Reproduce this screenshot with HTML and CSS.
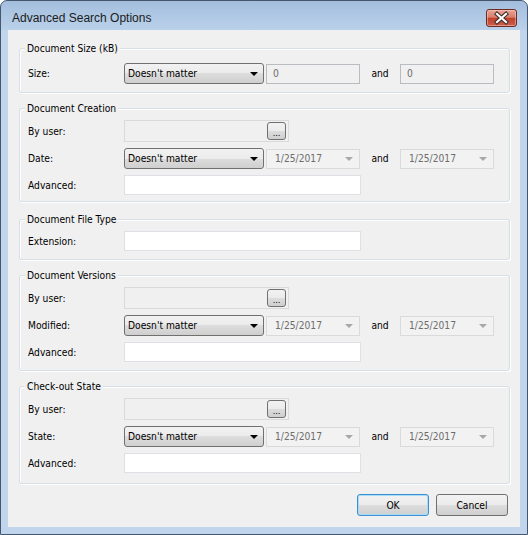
FILE: index.html
```html
<!DOCTYPE html>
<html lang="en">
<head>
  <meta charset="UTF-8" />
  <title>Advanced Search Options</title>
  <link rel="stylesheet" href="styles.css">
</head>
<body>

  <div class="window">
    <div class="titlebar">
      <span class="title">Advanced Search Options</span>
      <button class="close-btn" title="Close">
        <svg width="29" height="16" viewBox="0 0 29 16">
          <path d="M10 4 L19 12 M19 4 L10 12" stroke="#3a2a2a" stroke-width="4.2" stroke-linecap="square" fill="none"/>
          <path d="M10 4 L19 12 M19 4 L10 12" stroke="#ffffff" stroke-width="2.2" stroke-linecap="square" fill="none"/>
        </svg>
      </button>
    </div>

    <div class="client">

      <fieldset class="group group-size">
        <legend>Document Size (kB)</legend>
        <div class="row">
          <span class="row-label">Size:</span>
          <div class="combo"><span>Doesn't matter</span><span class="combo-arrow"></span></div>
          <div class="textbox disabled">0</div>
          <span class="and">and</span>
          <div class="textbox disabled">0</div>
        </div>
      </fieldset>

      <fieldset class="group group-creation">
        <legend>Document Creation</legend>
        <div class="row row-user">
          <span class="row-label">By user:</span>
          <div class="user-field"><button class="browse-btn">...</button></div>
        </div>
        <div class="row">
          <span class="row-label">Date:</span>
          <div class="combo"><span>Doesn't matter</span><span class="combo-arrow"></span></div>
          <div class="textbox datebox"><span>1/25/2017</span><span class="date-arrow"></span></div>
          <span class="and">and</span>
          <div class="textbox datebox"><span>1/25/2017</span><span class="date-arrow"></span></div>
        </div>
        <div class="row row-text">
          <span class="row-label">Advanced:</span>
          <div class="textbox wide"></div>
        </div>
      </fieldset>

      <fieldset class="group group-type">
        <legend>Document File Type</legend>
        <div class="row row-text">
          <span class="row-label">Extension:</span>
          <div class="textbox wide"></div>
        </div>
      </fieldset>

      <fieldset class="group">
        <legend>Document Versions</legend>
        <div class="row row-user">
          <span class="row-label">By user:</span>
          <div class="user-field"><button class="browse-btn">...</button></div>
        </div>
        <div class="row">
          <span class="row-label">Modified:</span>
          <div class="combo"><span>Doesn't matter</span><span class="combo-arrow"></span></div>
          <div class="textbox datebox"><span>1/25/2017</span><span class="date-arrow"></span></div>
          <span class="and">and</span>
          <div class="textbox datebox"><span>1/25/2017</span><span class="date-arrow"></span></div>
        </div>
        <div class="row row-text">
          <span class="row-label">Advanced:</span>
          <div class="textbox wide"></div>
        </div>
      </fieldset>

      <fieldset class="group group-checkout">
        <legend>Check-out State</legend>
        <div class="row row-user">
          <span class="row-label">By user:</span>
          <div class="user-field"><button class="browse-btn">...</button></div>
        </div>
        <div class="row">
          <span class="row-label">State:</span>
          <div class="combo"><span>Doesn't matter</span><span class="combo-arrow"></span></div>
          <div class="textbox datebox"><span>1/25/2017</span><span class="date-arrow"></span></div>
          <span class="and">and</span>
          <div class="textbox datebox"><span>1/25/2017</span><span class="date-arrow"></span></div>
        </div>
        <div class="row row-text">
          <span class="row-label">Advanced:</span>
          <div class="textbox wide"></div>
        </div>
      </fieldset>

      <div class="actions">
        <button class="btn btn-default">OK</button>
        <button class="btn">Cancel</button>
      </div>

    </div>
  </div>

</body>
</html>
```

FILE: styles.css
```css
body {
  margin: 0;
  font-family: "DejaVu Sans Condensed", "DejaVu Sans", sans-serif;
  font-size: 10.2px;
  color: #000;
  background: #fff;
}

.window {
  width: 528px;
  height: 535px;
  box-sizing: border-box;
  border: 1px solid #44576e;
  border-radius: 7px 7px 0 0;
  background: linear-gradient(#a3bedd, #bad1ea 29px, #c1d6ed 29px, #c1d6ed);
  padding: 0 7px 7px;
  display: flex;
  flex-direction: column;
}

.titlebar {
  height: 29px;
  box-sizing: border-box;
  padding: 5px 0 0 4px;
  display: flex;
  justify-content: space-between;
  align-items: center;
}

.title {
  font-family: "Liberation Sans", Arial, sans-serif;
  font-size: 12px;
  color: #1b1b1b;
}

.close-btn {
  width: 31px;
  height: 18px;
  margin-right: 3px;
  padding: 0;
  border: 1px solid #6e2b22;
  border-radius: 3px;
  background: linear-gradient(#e8a395, #d7806d 45%, #c2412b 52%, #c9604b);
  box-shadow: inset 0 0 0 1px rgba(255, 220, 210, 0.45);
  display: flex;
  align-items: center;
  justify-content: center;
}

.client {
  flex: 1;
  background: #f0f0f0;
  padding: 12px 10px 0 11px;
}

/* Group boxes */
.group {
  margin: 9px 0 0;
  padding: 5px 0 8px 8px;
  min-width: 0;
  border: 1px solid #d5dfe5;
  border-radius: 3px;
  box-shadow: inset 1px 1px 0 #fff, 1px 1px 0 #fff;
}

.group-size {
  margin-top: 0;
  padding-top: 8px;
}

.group-creation {
  padding-bottom: 6px;
}

.group-type {
  margin-top: 11px;
}

.group-checkout {
  padding-bottom: 10px;
}

.group legend {
  margin-left: -3px;
  padding: 0 2px;
  line-height: 13px;
  background: #f0f0f0;
}

.row {
  display: flex;
  align-items: center;
  height: 21px;
}

.row + .row {
  margin-top: 6px;
}

.row-user {
  height: 22px;
}

.row-text {
  height: 20px;
}

.row-label {
  flex: 0 0 96px;
}

/* Controls */
.combo {
  box-sizing: border-box;
  width: 140px;
  height: 21px;
  margin-right: 2px;
  padding: 0 5px 0 3px;
  border: 1px solid #707070;
  border-radius: 3px;
  background: linear-gradient(#f2f2f2, #ebebeb 50%, #dddddd 50%, #cfcfcf);
  display: flex;
  align-items: center;
  justify-content: space-between;
}

.combo-arrow {
  width: 0;
  height: 0;
  border-left: 4px solid transparent;
  border-right: 4px solid transparent;
  border-top: 4px solid #000;
}

.textbox {
  box-sizing: border-box;
  width: 94px;
  height: 20px;
  padding: 0 6px 0 6px;
  border: 1px solid #dde1e6;
  background: #fff;
  display: flex;
  align-items: center;
  justify-content: space-between;
}

.textbox.disabled {
  border-color: #b9bdc1;
  background: #f0f0f0;
  color: #6d6d6d;
}

.datebox {
  padding-left: 8px;
  border-color: #dadada;
  background: #f2f2f2;
  color: #6d6d6d;
}

.date-arrow {
  width: 0;
  height: 0;
  border-left: 4px solid transparent;
  border-right: 4px solid transparent;
  border-top: 4px solid #a8a8a8;
}

.textbox.wide {
  width: 237px;
}

.and {
  flex: 0 0 40px;
  text-align: center;
}

.user-field {
  box-sizing: border-box;
  width: 165px;
  height: 22px;
  padding-right: 2px;
  border: 1px solid #dadada;
  background: #f0f0f0;
  display: flex;
  align-items: center;
  justify-content: flex-end;
}

.browse-btn {
  box-sizing: border-box;
  width: 19px;
  height: 18px;
  padding: 4px 0 0;
  border: 1px solid #707070;
  border-radius: 3px;
  background: linear-gradient(#f2f2f2, #ebebeb 50%, #dddddd 50%, #cfcfcf);
  font-family: inherit;
  font-size: 9px;
  line-height: 10px;
  color: #000;
}

/* Dialog buttons */
.actions {
  display: flex;
  justify-content: flex-end;
  gap: 7px;
  margin-top: 10px;
  padding-right: 2px;
}

.btn {
  box-sizing: border-box;
  width: 72px;
  height: 22px;
  border: 1px solid #707070;
  border-radius: 3px;
  background: linear-gradient(#f2f2f2, #ebebeb 50%, #dddddd 50%, #cfcfcf);
  font-family: inherit;
  font-size: 10.2px;
  color: #000;
}

.btn-default {
  border-color: #3d8fd0;
  box-shadow: inset 0 0 0 1px #a6dcf8;
}
```
